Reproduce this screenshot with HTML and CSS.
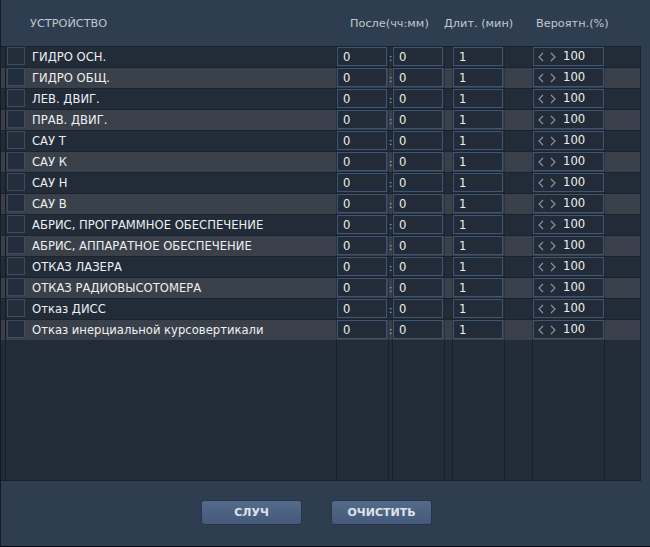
FILE: index.html
```html
<!DOCTYPE html>
<html lang="ru">
<head>
<meta charset="utf-8">
<title>Отказы</title>
<link rel="stylesheet" href="styles.css">
</head>
<body>
<div class="app">
  <div class="head grid">
    <div></div>
    <div class="h-name">УСТРОЙСТВО</div>
    <div class="h-after">После(чч:мм)</div>
    <div class="h-dur">Длит. (мин)</div>
    <div class="h-prob">Вероятн.(%)</div>
  </div>
  <div class="table">
    <div class="rows" id="rows"></div>
    <div class="filler grid">
      <div class="c"></div><div class="c"></div><div class="c"></div><div class="c"></div><div class="c"></div><div class="c"></div><div class="c"></div><div class="c"></div><div class="c"></div><div class="c last"></div>
    </div>
  </div>
  <div class="foot">
    <button class="btn">СЛУЧ</button>
    <button class="btn">ОЧИСТИТЬ</button>
  </div>
</div>
<script src="app.js"></script>
</body>
</html>
```
FILE: app.js
```js
const names = [
  "ГИДРО ОСН.", "ГИДРО ОБЩ.", "ЛЕВ. ДВИГ.", "ПРАВ. ДВИГ.", "САУ Т", "САУ К", "САУ Н", "САУ В",
  "АБРИС, ПРОГРАММНОЕ ОБЕСПЕЧЕНИЕ", "АБРИС, АППАРАТНОЕ ОБЕСПЕЧЕНИЕ", "ОТКАЗ ЛАЗЕРА",
  "ОТКАЗ РАДИОВЫСОТОМЕРА", "Отказ ДИСС", "Отказ инерциальной курсовертикали"
];
const left = '<svg class="arr" width="6" height="10" viewBox="0 0 6 10"><polyline points="5,1 1,5 5,9" fill="none" stroke="#8c98a7" stroke-width="1.1"/></svg>';
const right = '<svg class="arr" width="6" height="10" viewBox="0 0 6 10"><polyline points="1,1 5,5 1,9" fill="none" stroke="#8c98a7" stroke-width="1.1"/></svg>';
const rows = document.getElementById("rows");
names.forEach((n, i) => {
  const r = document.createElement("div");
  r.className = "row grid" + (i % 2 ? " alt" : "");
  r.innerHTML =
    '<div class="c"></div>' +
    '<div class="c name"><span class="chk"></span><span class="lbl">' + n + '</span></div>' +
    '<div class="c"><span class="inp">0</span></div>' +
    '<div class="c colon">:</div>' +
    '<div class="c"><span class="inp">0</span></div>' +
    '<div class="c"></div>' +
    '<div class="c"><span class="inp">1</span></div>' +
    '<div class="c"></div>' +
    '<div class="c"><span class="inp prob">' + left + right + '<span class="pv">100</span></span></div>' +
    '<div class="c last"></div>';
  rows.appendChild(r);
});
```
FILE: styles.css
```css
* { box-sizing: border-box; }
html, body { margin: 0; padding: 0; }
body {
  width: 650px;
  height: 547px;
  background: #2e3d4f;
  font-family: "DejaVu Sans", sans-serif;
  overflow: hidden;
}
.app {
  height: 547px;
  display: flex;
  flex-direction: column;
  border-left: 1px solid #141b24;
  border-bottom: 1px solid #05070a;
}
.grid {
  display: grid;
  grid-template-columns: 4px 331px 52px 4px 52px 8px 52px 28px 72px 36px;
}
.head {
  height: 46px;
  align-items: center;
  font-size: 11.3px;
  color: #c0c8d1;
  width: 639px;
  padding-top: 1px;
}
.h-name { padding-left: 25px; }
.h-after { grid-column: 3 / 6; padding-left: 14px; white-space: nowrap; }
.h-dur { grid-column: 6 / 9; white-space: nowrap; }
.h-prob { grid-column: 9 / 11; padding-left: 4px; white-space: nowrap; }

.table {
  width: 640px;
  height: 435px;
  background: #222b38;
  border-top: 1px solid #1b232e;
  border-right: 1px solid #1a222c;
  border-bottom: 1px solid #19212b;
  display: flex;
  flex-direction: column;
}
.rows { display: flex; flex-direction: column; }
.row {
  height: 21px;
  background: #222b38;
  border-top: 1px solid #1b232d;
  font-size: 11.6px;
  color: #eef0f2;
}
.row:first-child { border-top: none; height: 20px; }
.row.alt { background: #3a4049; }
.row .c { border-left: 1px solid rgba(20, 27, 36, 0.35); display: flex; align-items: flex-start; }
.row .c:first-child { border-left: none; }
.row .c.name { padding-left: 1px; align-items: flex-start; }
.chk {
  width: 18px;
  height: 18px;
  border: 1px solid #3a4c62;
  background: #232d3b;
  margin-right: 7px;
  flex: none;
}
.lbl { white-space: nowrap; line-height: 21px; }
.inp {
  display: block;
  width: 50px;
  height: 19px;
  border: 1px solid #3d5675;
  background: #222b38;
  line-height: 19px;
  padding-left: 5px;
}
.prob { width: 71px; display: flex; align-items: center; padding-left: 4px; }
.arr { display: block; margin-right: 6px; flex: none; }
.pv { margin-left: 1px; line-height: 19px; }
.colon { color: #aeb6c0; font-size: 11px; justify-content: center; line-height: 21px; }
.row .c:nth-child(2) { border-left-color: #141b24; }

.filler { flex: 1; }
.filler .c { border-left: 1px solid #18202a; }
.filler .c:first-child { border-left: none; }

.foot {
  flex: 1;
  display: flex;
  align-items: flex-start;
  padding-top: 19px;
  padding-left: 200px;
  gap: 29px;
}
.btn {
  width: 101px;
  height: 25px;
  border: 1px solid #283444;
  border-radius: 3px;
  background: linear-gradient(#536b8b, #46597a);
  color: #dde3ea;
  font-family: "DejaVu Sans", sans-serif;
  font-weight: bold;
  font-size: 11px;
  padding: 0;
}
```
